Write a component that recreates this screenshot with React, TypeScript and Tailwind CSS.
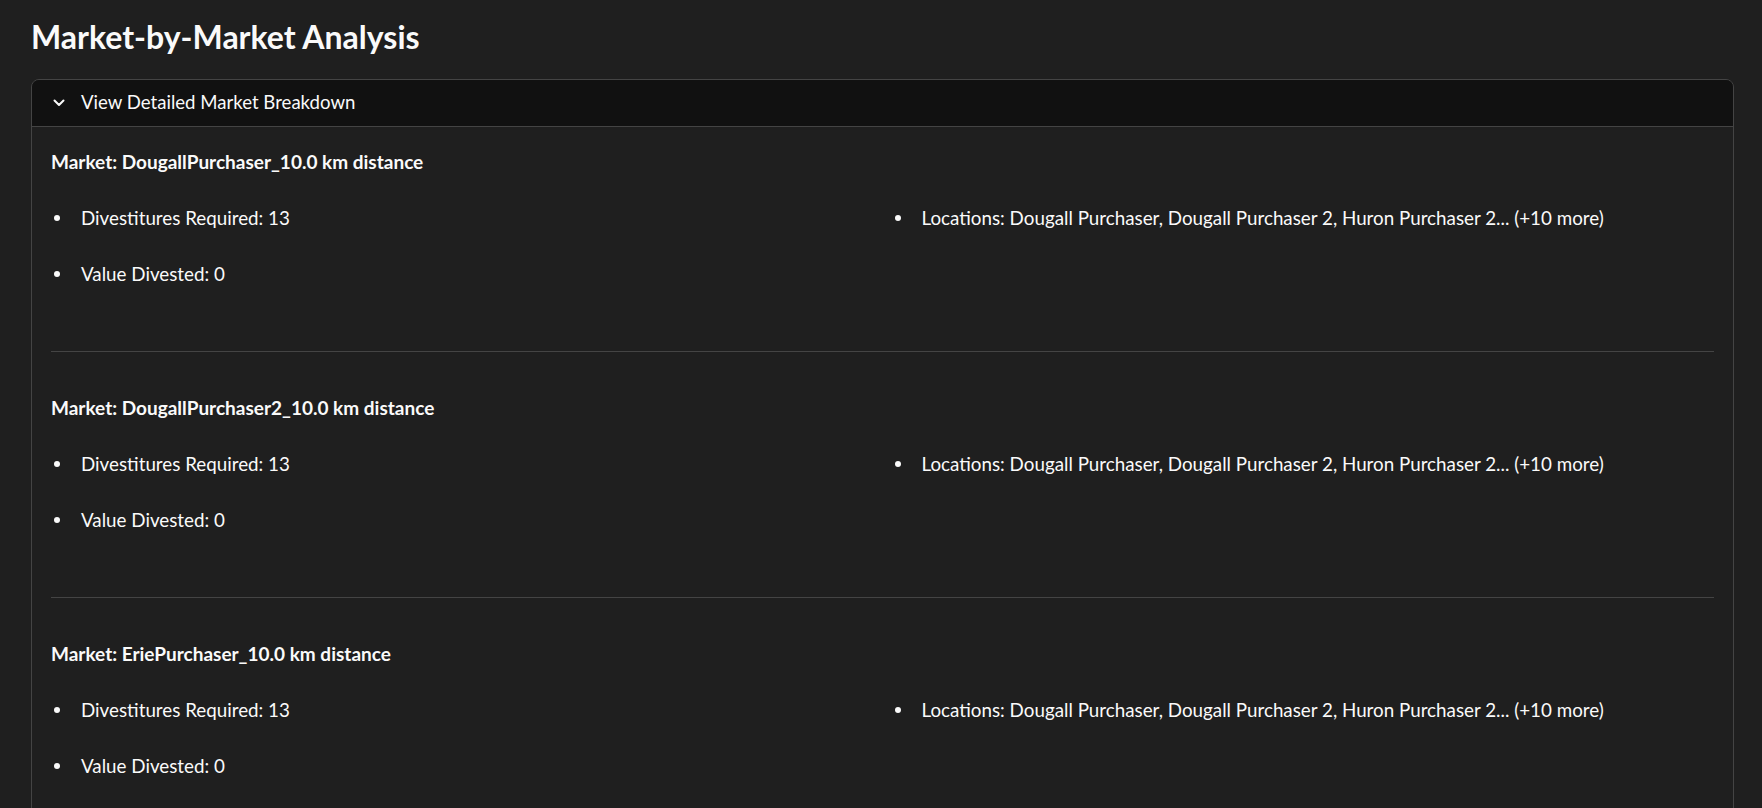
import React from "react";

const FONT = '"Lato", "Liberation Sans", sans-serif';

const markets = [
  "Market: DougallPurchaser_10.0 km distance",
  "Market: DougallPurchaser2_10.0 km distance",
  "Market: EriePurchaser_10.0 km distance",
  "Market: HuronPurchaser_10.0 km distance",
];

const LOC = "Locations: Dougall Purchaser, Dougall Purchaser 2, Huron Purchaser 2... (+10 more)";

function Bullet({ children }: { children: React.ReactNode }) {
  return (
    <div className="flex items-center h-[28px] whitespace-nowrap">
      <span className="w-[30px] flex justify-start pl-[3px] shrink-0">
        <span className="block w-[6px] h-[6px] rounded-full bg-[#fafafa]" />
      </span>
      <span>{children}</span>
    </div>
  );
}

export default function App() {
  return (
    <div className="min-h-screen bg-[#1f1f1f] text-[#fafafa] pl-[31px] pr-[28px] pt-[18px] pb-10" style={{ fontFamily: FONT }}>
      <h1 className="text-[32px] font-bold leading-[38px] mb-[23px]">Market-by-Market Analysis</h1>
      <div className="border border-[#444444] rounded-lg overflow-hidden">
        <div className="h-[47px] bg-[#111111] border-b border-[#444444] flex items-center pl-[21px] text-[18.6px]">
          <svg width="12" height="8" viewBox="0 0 12 8" className="mr-[16px] shrink-0">
            <polyline points="1.5,1.5 6,6 10.5,1.5" fill="none" stroke="#fafafa" strokeWidth="2" strokeLinecap="round" strokeLinejoin="round" />
          </svg>
          <span>View Detailed Market Breakdown</span>
        </div>
        <div className="px-[19px] pt-[21px] pb-[40px] text-[18.8px]">
          {markets.map((m, i) => (
            <div key={m}>
              <div className="font-bold text-[19px] leading-[28px] h-[28px] whitespace-nowrap">{m}</div>
              <div className="grid grid-cols-2 gap-x-[18px] mt-[28px]">
                <div className="flex flex-col gap-[28px]">
                  <Bullet>Divestitures Required: 13</Bullet>
                  <Bullet>Value Divested: 0</Bullet>
                </div>
                <div>
                  <Bullet>{LOC}</Bullet>
                </div>
              </div>
              {i < markets.length - 1 && <div className="h-px bg-[#444444] mt-[63px] mb-[42px]" />}
            </div>
          ))}
        </div>
      </div>
    </div>
  );
}
